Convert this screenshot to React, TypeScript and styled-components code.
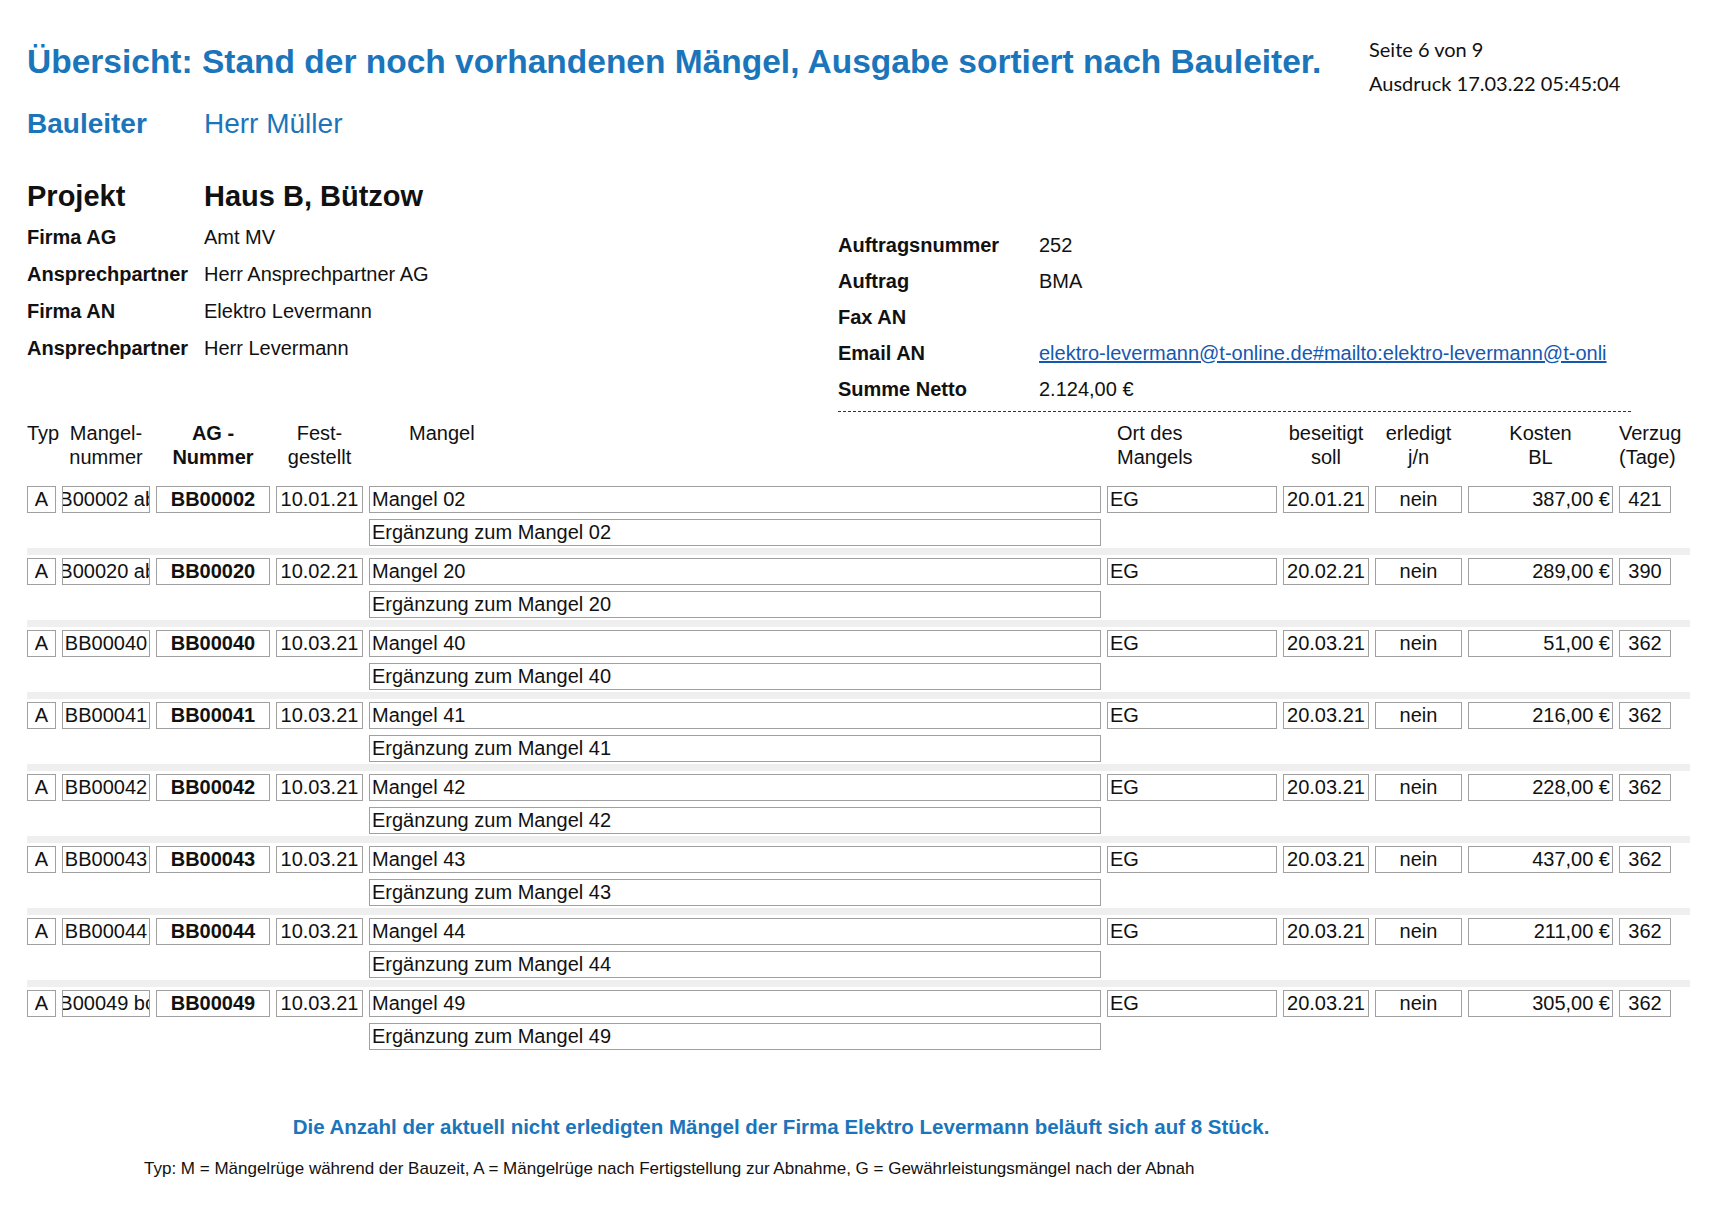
import { createGlobalStyle } from "styled-components";
import styled from "styled-components";

const GlobalStyle = createGlobalStyle`
  body {
    margin: 0;
    background: #fff;
    font-family: "Liberation Sans", Arial, sans-serif;
    color: #111;
  }
`;

const blue = "#1b75bb";

const rows = [
  { nr: "BB00002 abc", ag: "BB00002", date: "10.01.21", m: "02", soll: "20.01.21", cost: "387,00 €", days: "421" },
  { nr: "BB00020 abc", ag: "BB00020", date: "10.02.21", m: "20", soll: "20.02.21", cost: "289,00 €", days: "390" },
  { nr: "BB00040", ag: "BB00040", date: "10.03.21", m: "40", soll: "20.03.21", cost: "51,00 €", days: "362" },
  { nr: "BB00041", ag: "BB00041", date: "10.03.21", m: "41", soll: "20.03.21", cost: "216,00 €", days: "362" },
  { nr: "BB00042", ag: "BB00042", date: "10.03.21", m: "42", soll: "20.03.21", cost: "228,00 €", days: "362" },
  { nr: "BB00043", ag: "BB00043", date: "10.03.21", m: "43", soll: "20.03.21", cost: "437,00 €", days: "362" },
  { nr: "BB00044", ag: "BB00044", date: "10.03.21", m: "44", soll: "20.03.21", cost: "211,00 €", days: "362" },
  { nr: "BB00049 bcd", ag: "BB00049", date: "10.03.21", m: "49", soll: "20.03.21", cost: "305,00 €", days: "362" },
];

const cols = "29px 88px 114px 87px 732px 170px 86px 87px 145px 52px";

export default function App() {
  return (
    <Page>
      <GlobalStyle />
      <TopBar>
        <Title>Übersicht: Stand der noch vorhandenen Mängel, Ausgabe sortiert nach Bauleiter.</Title>
        <Meta>
          <div>Seite 6 von 9</div>
          <div>Ausdruck 17.03.22 05:45:04</div>
        </Meta>
      </TopBar>
      <LeiterRow>
        <LeiterLabel>Bauleiter</LeiterLabel>
        <LeiterName>Herr Müller</LeiterName>
      </LeiterRow>
      <ProjektRow>
        <span>Projekt</span>
        <span>Haus B, Bützow</span>
      </ProjektRow>
      <InfoWrap>
        <InfoLeft>
          <Label>Firma AG</Label><Value>Amt MV</Value>
          <Label>Ansprechpartner</Label><Value>Herr Ansprechpartner AG</Value>
          <Label>Firma AN</Label><Value>Elektro Levermann</Value>
          <Label>Ansprechpartner</Label><Value>Herr Levermann</Value>
        </InfoLeft>
        <InfoRight>
          <Label>Auftragsnummer</Label><Value>252</Value>
          <Label>Auftrag</Label><Value>BMA</Value>
          <Label>Fax AN</Label><Value></Value>
          <Label>Email AN</Label>
          <Link>elektro-levermann@t-online.de#mailto:elektro-levermann@t-onli</Link>
          <Label>Summe Netto</Label><Value>2.124,00 €</Value>
          <Dashed />
        </InfoRight>
      </InfoWrap>
      <HeadRow>
        <HeadCell>Typ</HeadCell>
        <HeadCell $center>Mangel-<br />nummer</HeadCell>
        <HeadCell $center $bold>AG -<br />Nummer</HeadCell>
        <HeadCell $center>Fest-<br />gestellt</HeadCell>
        <HeadCell style={{ paddingLeft: 40 }}>Mangel</HeadCell>
        <HeadCell style={{ paddingLeft: 10 }}>Ort des<br />Mangels</HeadCell>
        <HeadCell $center>beseitigt<br />soll</HeadCell>
        <HeadCell $center>erledigt<br />j/n</HeadCell>
        <HeadCell $center>Kosten<br />BL</HeadCell>
        <HeadCell $center>Verzug<br />(Tage)</HeadCell>
      </HeadRow>
      <Rows>
        {rows.map((r, i) => (
          <Group key={r.ag} $last={i === rows.length - 1}>
            <Line>
              <Cell $align="center">A</Cell>
              <Cell $align="center">{r.nr}</Cell>
              <Cell $align="center" $bold>{r.ag}</Cell>
              <Cell $align="center">{r.date}</Cell>
              <Cell>Mangel {r.m}</Cell>
              <Cell>EG</Cell>
              <Cell $align="center">{r.soll}</Cell>
              <Cell $align="center">nein</Cell>
              <Cell $align="flex-end">{r.cost}</Cell>
              <Cell $align="center">{r.days}</Cell>
            </Line>
            <Line>
              <Cell style={{ gridColumn: "5" }}>Ergänzung zum Mangel {r.m}</Cell>
            </Line>
          </Group>
        ))}
      </Rows>
      <Summary>
        Die Anzahl der aktuell nicht erledigten Mängel der Firma Elektro Levermann beläuft sich auf 8 Stück.
      </Summary>
      <Legend>
        Typ: M = Mängelrüge während der Bauzeit, A = Mängelrüge nach Fertigstellung zur Abnahme, G = Gewährleistungsmängel nach der Abnah
      </Legend>
    </Page>
  );
}

const Page = styled.div`
  width: 1712px;
  height: 1216px;
  padding: 0 0 0 27px;
  box-sizing: border-box;
  overflow: hidden;
`;

const TopBar = styled.div`
  display: flex;
  padding-top: 32px;
`;

const Title = styled.h1`
  margin: 11px 0 0;
  width: 1342px;
  font-size: 33.5px;
  font-weight: bold;
  color: ${blue};
  letter-spacing: 0;
  white-space: nowrap;
`;

const Meta = styled.div`
  font-family: Lato, "Open Sans", sans-serif;
  font-size: 20px;
  line-height: 34px;
  color: #111;
`;

const LeiterRow = styled.div`
  display: grid;
  grid-template-columns: 177px auto;
  margin-top: 8px;
  align-items: baseline;
`;

const LeiterLabel = styled.div`
  font-size: 28px;
  font-weight: bold;
  color: ${blue};
`;

const LeiterName = styled.div`
  font-size: 28px;
  color: ${blue};
`;

const ProjektRow = styled.div`
  display: grid;
  grid-template-columns: 177px auto;
  margin-top: 40px;
  font-size: 29px;
  font-weight: bold;
`;

const InfoWrap = styled.div`
  display: flex;
  margin-top: 6px;
`;

const InfoLeft = styled.div`
  display: grid;
  grid-template-columns: 177px auto;
  grid-auto-rows: 37px;
  width: 811px;
  align-content: start;
  align-items: center;
`;

const InfoRight = styled.div`
  display: grid;
  grid-template-columns: 201px 592px;
  grid-auto-rows: 36px;
  align-items: center;
  margin-top: 8px;
`;

const Label = styled.div`
  font-size: 20px;
  font-weight: bold;
`;

const Value = styled.div`
  font-size: 20px;
`;

const Link = styled.div`
  font-size: 20px;
  color: #1558b0;
  text-decoration: underline;
  white-space: nowrap;
  overflow: hidden;
`;

const Dashed = styled.div`
  grid-column: 1 / 3;
  align-self: start;
  margin-top: 4px;
  height: 0;
  border-top: 1.5px dashed #333;
`;

const HeadRow = styled.div`
  display: grid;
  grid-template-columns: ${cols};
  column-gap: 6px;
  margin-top: -22px;
  font-size: 20px;
  line-height: 24px;
`;

const HeadCell = styled.div<{ $center?: boolean; $bold?: boolean }>`
  text-align: ${(p) => (p.$center ? "center" : "left")};
  font-weight: ${(p) => (p.$bold ? "bold" : "normal")};
  white-space: nowrap;
`;

const Rows = styled.div`
  margin-top: 17px;
  width: 1663px;
`;

const Group = styled.div<{ $last: boolean }>`
  display: flex;
  flex-direction: column;
  gap: 6px;
  padding-bottom: 2px;
  margin-bottom: 3px;
  border-bottom: 7px solid ${(p) => (p.$last ? "transparent" : "#efefef")};
`;

const Line = styled.div`
  display: grid;
  grid-template-columns: ${cols};
  column-gap: 6px;
  grid-auto-rows: 27px;
`;

const Cell = styled.div<{ $align?: string; $bold?: boolean }>`
  display: flex;
  align-items: center;
  justify-content: ${(p) => p.$align ?? "flex-start"};
  border: 1px solid #a0a0a0;
  padding: 0 2px;
  font-size: 20px;
  font-weight: ${(p) => (p.$bold ? "bold" : "normal")};
  white-space: nowrap;
  overflow: hidden;
  box-sizing: border-box;
`;

const Summary = styled.div`
  margin-top: 56px;
  width: 1508px;
  text-align: center;
  font-size: 20.5px;
  font-weight: bold;
  color: ${blue};
`;

const Legend = styled.div`
  margin: 20px 0 0 117px;
  font-size: 17px;
`;
